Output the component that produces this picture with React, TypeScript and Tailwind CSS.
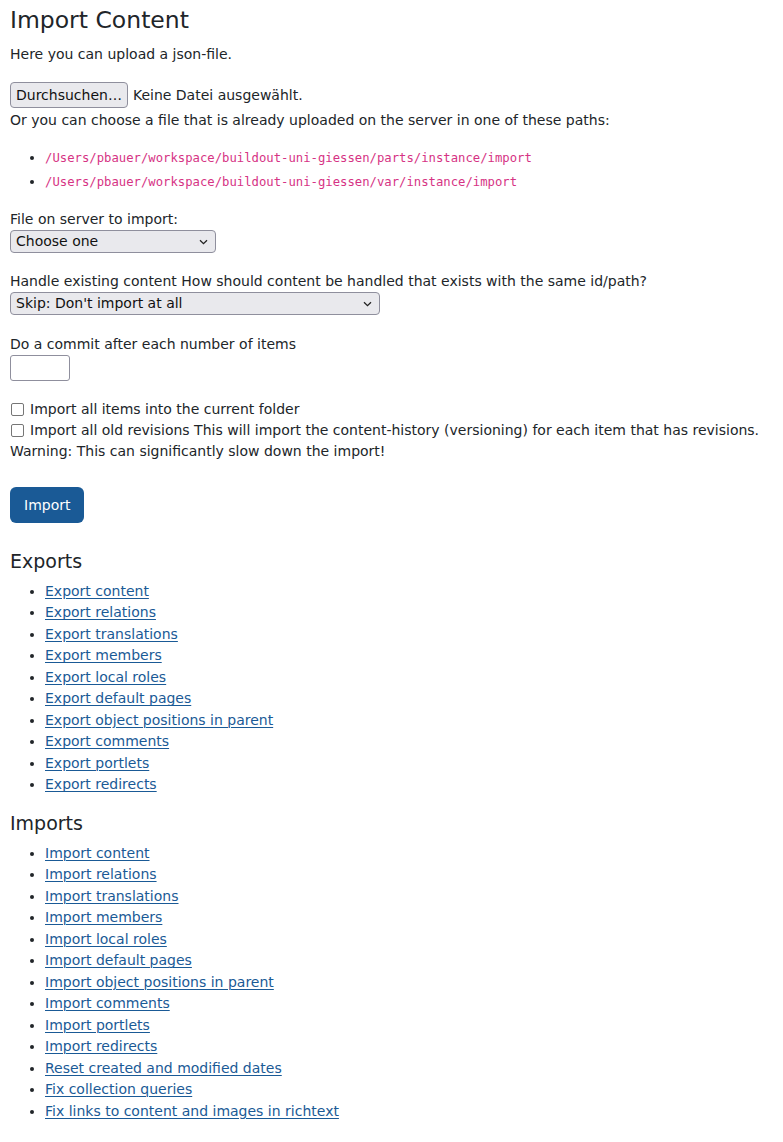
import React from "react";

const exportsList = [
  "Export content",
  "Export relations",
  "Export translations",
  "Export members",
  "Export local roles",
  "Export default pages",
  "Export object positions in parent",
  "Export comments",
  "Export portlets",
  "Export redirects",
];

const importsList = [
  "Import content",
  "Import relations",
  "Import translations",
  "Import members",
  "Import local roles",
  "Import default pages",
  "Import object positions in parent",
  "Import comments",
  "Import portlets",
  "Import redirects",
  "Reset created and modified dates",
  "Fix collection queries",
  "Fix links to content and images in richtext",
];

function Chevron() {
  return (
    <svg width="9" height="6" viewBox="0 0 9 6" className="absolute right-[8px] top-1/2 -translate-y-1/2 pointer-events-none">
      <path d="M1 1.2 L4.5 4.6 L8 1.2" fill="none" stroke="#222" strokeWidth="1.3" />
    </svg>
  );
}

function Select({ value, width }: { value: string; width: string }) {
  return (
    <div className={`relative ${width}`}>
      <select
        className="appearance-none w-full h-[23px] border border-[#8f8f9d] rounded-[4px] bg-[#e9e9ed] pl-[5px] text-[14px] leading-[21px] text-[#111] outline-none"
        defaultValue={value}
      >
        <option>{value}</option>
      </select>
      <Chevron />
    </div>
  );
}

function LinkList({ items }: { items: string[] }) {
  return (
    <ul className="list-disc pl-[35px] mt-[8px]">
      {items.map((t) => (
        <li key={t} className="leading-[21.5px]">
          <a href="#" className="text-[#1a5a96] underline decoration-[1px] underline-offset-[2px]">
            {t}
          </a>
        </li>
      ))}
    </ul>
  );
}

function Check({ label }: { label: string }) {
  return (
    <div className="flex items-center gap-[6px]">
      <span className="ml-[1px] w-[13px] h-[13px] border border-[#767676] rounded-[2px] bg-white shrink-0" />
      <span>{label}</span>
    </div>
  );
}

export default function App() {
  return (
    <div
      className="bg-white text-[#212529] px-[10px] pt-[6px] pb-[20px] text-[14px] leading-[1.5]"
      style={{ fontFamily: '"DejaVu Sans", Verdana, sans-serif' }}
    >
      <h1 className="text-[23.5px] leading-[1.2] font-normal mb-[10px]">Import Content</h1>
      <p>Here you can upload a json-file.</p>

      <div className="mt-[17px] flex items-center gap-[5px]">
        <button className="h-[26px] px-[5px] border border-[#8f8f9d] rounded-[4px] bg-[#e9e9ed] text-[14px] text-[#111]">
          Durchsuchen…
        </button>
        <span>Keine Datei ausgewählt.</span>
      </div>
      <p className="mt-[2px]">Or you can choose a file that is already uploaded on the server in one of these paths:</p>

      <ul className="list-disc pl-[35px] mt-[15px] mb-[15px]">
        <li className="leading-[23px]">
          <code className="text-[#d63384] text-[12.25px]" style={{ fontFamily: '"DejaVu Sans Mono", monospace' }}>
            /Users/pbauer/workspace/buildout-uni-giessen/parts/instance/import
          </code>
        </li>
        <li className="leading-[23px]">
          <code className="text-[#d63384] text-[12.25px]" style={{ fontFamily: '"DejaVu Sans Mono", monospace' }}>
            /Users/pbauer/workspace/buildout-uni-giessen/var/instance/import
          </code>
        </li>
      </ul>

      <label className="block">File on server to import:</label>
      <Select value="Choose one" width="w-[206px]" />

      <label className="block mt-[18px]">
        Handle existing content How should content be handled that exists with the same id/path?
      </label>
      <Select value="Skip: Don't import at all" width="w-[370px]" />

      <label className="block mt-[19px]">Do a commit after each number of items</label>
      <input type="text" className="block w-[60px] h-[26px] border border-[#8f8f9d] rounded-[3px] bg-white" />

      <div className="mt-[18px]">
        <Check label="Import all items into the current folder" />
        <Check label="Import all old revisions This will import the content-history (versioning) for each item that has revisions." />
      </div>
      <p>Warning: This can significantly slow down the import!</p>

      <button className="mt-[25px] h-[36px] px-[14px] rounded-[6px] bg-[#1a5a96] text-white text-[14px]">
        Import
      </button>

      <h2 className="text-[19px] leading-[1.2] mt-[27px]">Exports</h2>
      <LinkList items={exportsList} />

      <h2 className="text-[19px] leading-[1.2] mt-[16px]">Imports</h2>
      <LinkList items={importsList} />
    </div>
  );
}
